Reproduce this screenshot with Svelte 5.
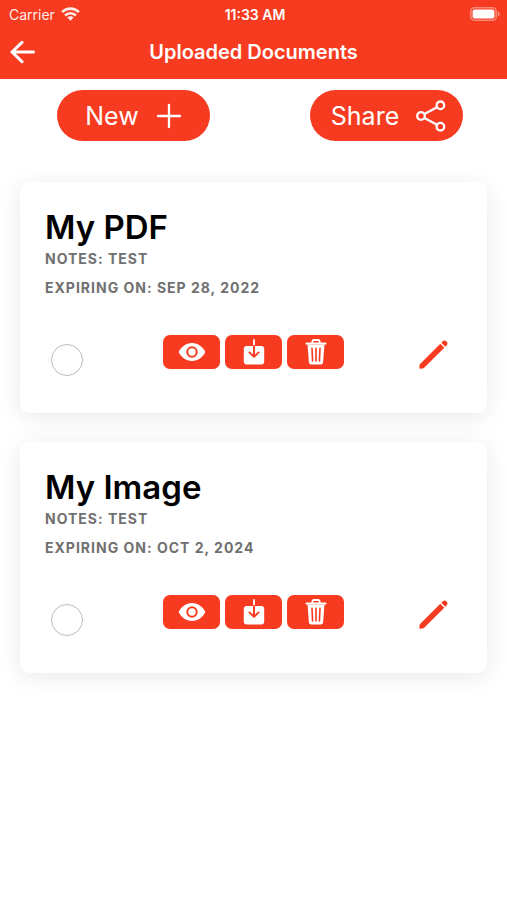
<script>
  const documents = [
    { id: 'pdf', title: 'My PDF', notes: 'Test', expiry: 'Sep 28, 2022' },
    { id: 'image', title: 'My Image', notes: 'Test', expiry: 'Oct 2, 2024' }
  ];
  let selected = $state({ pdf: false, image: false });
</script>

<div class="screen">
  <header>
    <div class="status">
      <span class="carrier">
        Carrier
        <svg width="19" height="14" viewBox="0 0 19 14" aria-hidden="true">
          <g fill="none" stroke="#fff" stroke-width="2.6">
            <path d="M1.1 5.1a12 12 0 0 1 16.8 0" />
            <path d="M4.1 8.5a7.7 7.7 0 0 1 10.8 0" />
          </g>
          <path d="M6.3 10.5a4.5 4.5 0 0 1 6.4 0L9.5 13.8z" fill="#fff" />
        </svg>
      </span>
      <time>11:33 AM</time>
      <svg class="battery" width="31" height="14" viewBox="0 0 31 14" aria-hidden="true">
        <rect x="0.8" y="0.8" width="25.4" height="12.4" rx="3.8" fill="none" stroke="#fff" stroke-opacity=".4" stroke-width="1.6" />
        <rect x="2.6" y="2.6" width="21.8" height="8.8" rx="2" fill="#fff" />
        <path d="M27.8 4.6c2.4.6 2.4 4.2 0 4.8z" fill="#fff" fill-opacity=".5" />
      </svg>
    </div>
    <div class="bar">
      <button class="plain" aria-label="Back">
        <svg width="26" height="24" viewBox="0 0 26 24" fill="none" stroke="#fff" stroke-width="3" stroke-linecap="round" stroke-linejoin="round">
          <path d="M23.5 12H2M12 2.3L2 12l10 9.7" />
        </svg>
      </button>
      <h1>Uploaded Documents</h1>
    </div>
  </header>

  <main>
    <div class="actions">
      <button class="pill">
        New
        <svg width="26" height="26" viewBox="0 0 26 26" fill="none" stroke="#fff" stroke-width="2.3" stroke-linecap="round">
          <path d="M13 2v22M2 13h22" />
        </svg>
      </button>
      <button class="pill share">
        Share
        <svg width="30" height="32" viewBox="0 0 30 32" fill="none" stroke="#fff" stroke-width="2.3">
          <circle cx="5" cy="16" r="3.8" />
          <circle cx="24.4" cy="5.3" r="3.8" />
          <circle cx="24.4" cy="26.7" r="3.8" />
          <path d="M8.4 14.1L21 7.2M8.4 17.9L21 24.8" />
        </svg>
      </button>
    </div>

    {#each documents as doc (doc.id)}
      <article>
        <h2>{doc.title}</h2>
        <p>Notes: {doc.notes}</p>
        <p>Expiring on: {doc.expiry}</p>
        <div class="tools">
          <input type="checkbox" aria-label={`Select ${doc.title}`} bind:checked={selected[doc.id]} />
          <div class="chips">
            <button class="chip" aria-label="View">
              <svg width="28" height="28" viewBox="0 0 28 28">
                <path d="M.6 14C3 9 8 5 14 5s11 4 13.4 9C25 19 20 23 14 23S3 19 .6 14z" fill="#fff" />
                <circle cx="14" cy="14" r="4.7" fill="#fff" stroke="#f73b20" stroke-width="2" />
              </svg>
            </button>
            <button class="chip" aria-label="Download">
              <svg width="28" height="28" viewBox="0 0 28 28" fill="none" stroke-linecap="round" stroke-linejoin="round">
                <rect x="3.8" y="8" width="20.4" height="18.4" rx="3" fill="#fff" />
                <path d="M14 2v6" stroke="#fff" stroke-width="1.8" />
                <path d="M14 8v10.6M9.4 14.4l4.6 4.4 4.6-4.4" stroke="#f73b20" stroke-width="1.9" />
              </svg>
            </button>
            <button class="chip" aria-label="Delete">
              <svg width="28" height="28" viewBox="0 0 28 28" fill="none" stroke-linecap="round">
                <path d="M10.4 4.8V3.6c0-1 .6-1.6 1.6-1.6h4c1 0 1.6.6 1.6 1.6v1.2" stroke="#fff" stroke-width="1.8" />
                <path d="M4.6 5.6h18.8" stroke="#fff" stroke-width="2.2" />
                <path d="M5.6 7h16.8l-1.3 17.4a2.3 2.3 0 0 1-2.3 2.1H9.2a2.3 2.3 0 0 1-2.3-2.1z" fill="#fff" />
                <path d="M10 10.2l.6 12.8M14 10.2V23M18 10.2L17.4 23" stroke="#f73b20" stroke-width="1.6" />
              </svg>
            </button>
          </div>
          <button class="plain edit" aria-label="Edit">
            <svg width="29" height="29" viewBox="0 0 29 29" fill="#f73b20">
              <path d="M21.3 3.7l4 4L5.2 27.7c-.5.5-1 .7-1.7.8l-2.2.2c-.6 0-1-.3-1-.9l.2-2.2c.1-.7.3-1.3.8-1.8z" />
              <path d="M22.3 2.7l1.4-1.4c2.5-2.4 6.4 1.5 4 4l-1.4 1.4z" />
            </svg>
          </button>
        </div>
      </article>
    {/each}
  </main>
</div>

<style>
  :global(body) {
    margin: 0;
    background: #fff;
  }
  .screen {
    min-height: 100vh;
    font-family: Inter, 'Liberation Sans', sans-serif;
    color: #000;
    background: #fff;
  }
  header {
    background: #f73b20;
    color: #fff;
    padding-bottom: 7px;
  }
  .status,
  .bar,
  .tools {
    display: grid;
    grid-template-columns: 1fr auto 1fr;
  }
  .status {
    align-items: center;
    height: 28px;
    padding: 0 6px 0 9px;
    font-size: 14px;
  }
  .carrier {
    display: flex;
    align-items: center;
    gap: 6px;
    opacity: 0.9;
  }
  time {
    font-weight: 600;
  }
  .battery {
    justify-self: end;
  }
  .bar {
    align-items: center;
    box-sizing: border-box;
    height: 44px;
    padding: 4px 10px 0;
  }
  h1 {
    margin: 0;
    font-size: 20px;
    line-height: 24px;
    font-weight: 600;
  }
  button {
    font-family: inherit;
    border: 0;
    padding: 0;
    cursor: pointer;
  }
  svg {
    display: block;
    flex: none;
  }
  .plain {
    background: none;
    justify-self: start;
  }
  .actions {
    display: flex;
    justify-content: space-between;
    padding: 11px 44px 41px 57px;
  }
  .pill {
    display: flex;
    align-items: center;
    justify-content: center;
    gap: 17px;
    width: 153px;
    height: 51px;
    border-radius: 26px;
    background: #f73b20;
    color: #fff;
    font-size: 25px;
  }
  .share {
    padding-left: 4px;
  }
  article {
    margin: 0 20px 29px;
    padding: 25px 25px 37px;
    border-radius: 10px;
    background: #fff;
    box-shadow: 0 4px 24px rgba(0, 0, 0, 0.09);
  }
  h2 {
    margin: 0 0 2px;
    font-size: 33px;
    line-height: 40px;
    font-weight: 600;
  }
  p {
    margin: 0 0 9px;
    font-size: 14px;
    line-height: 20px;
    font-weight: 700;
    letter-spacing: 1px;
    text-transform: uppercase;
    color: #707070;
  }
  .tools {
    align-items: start;
    padding-top: 28px;
  }
  input {
    appearance: none;
    box-sizing: border-box;
    width: 32px;
    height: 32px;
    margin: 9px 0 0 6px;
    border: 1px solid #bdbdbd;
    border-radius: 50%;
    background: #fff;
  }
  input:checked {
    background: #f73b20;
  }
  .chips {
    display: flex;
    gap: 5px;
  }
  .chip {
    display: flex;
    align-items: center;
    justify-content: center;
    width: 57px;
    height: 34px;
    border-radius: 7px;
    background: #f73b20;
  }
  .edit {
    justify-self: end;
    margin: 5px 14px 0 0;
  }
</style>
